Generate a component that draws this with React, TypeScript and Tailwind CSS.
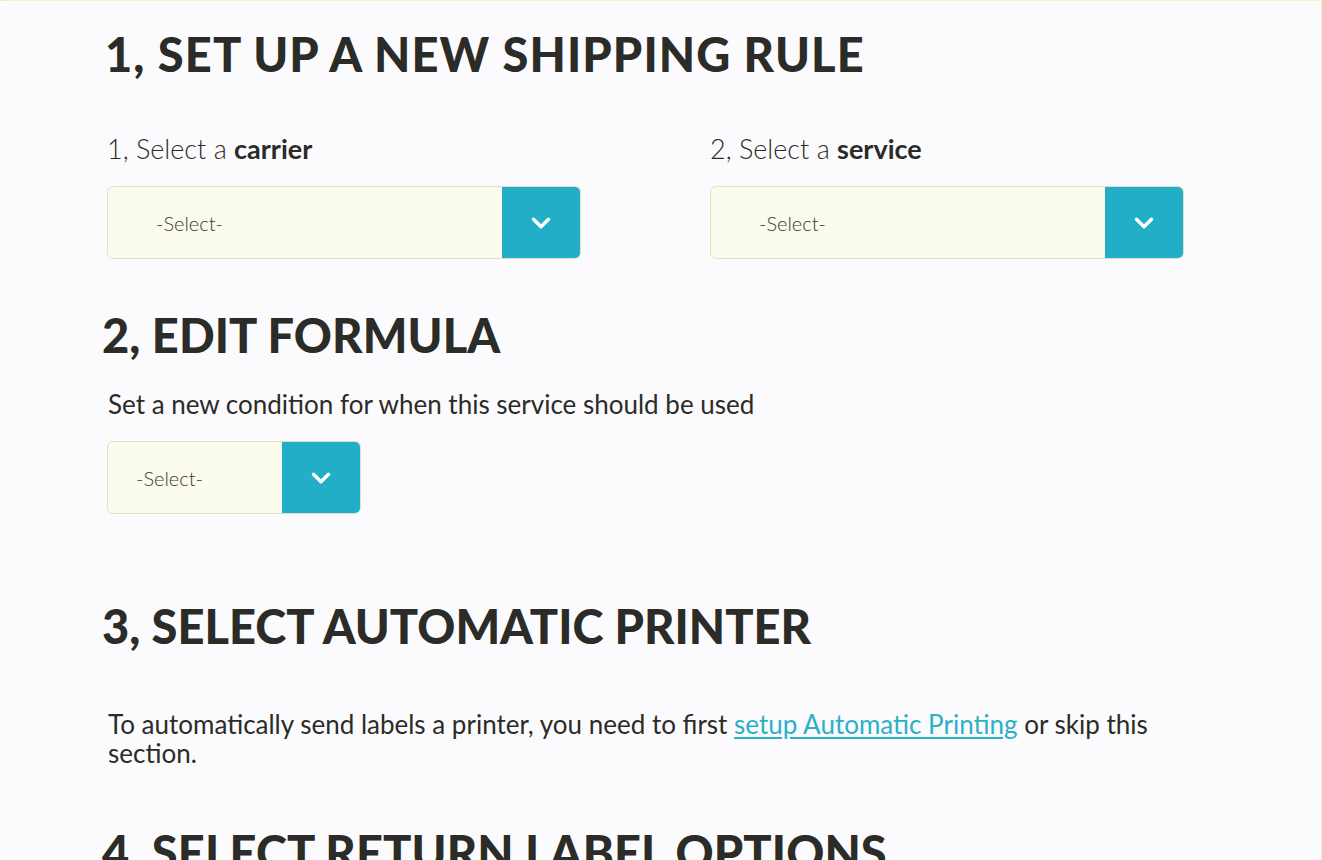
import { ChevronDown } from "lucide-react";

interface SelectBoxProps {
  width: string;
  textPad: string;
}

function SelectBox({ width, textPad }: SelectBoxProps) {
  return (
    <div
      className={`${width} h-[73px] flex rounded-[6px] border border-[#e4e0c6] bg-[#fbfbee] overflow-hidden`}
    >
      <div className={`flex-1 flex items-center ${textPad} text-[20px] font-light text-[#3a3a36]`}>
        -Select-
      </div>
      <div className="w-[78px] flex items-center justify-center bg-[#22aec6]">
        <ChevronDown size={30} strokeWidth={2.8} className="text-white" />
      </div>
    </div>
  );
}

export default function App() {
  return (
    <div className="min-h-[860px] h-[860px] overflow-hidden bg-[#fbfbfe] border-t border-r border-dotted border-[#efe78f] pl-[102px] font-['Lato',sans-serif] text-[#2b2b28]">
      <h1 className="pt-[27px] text-[47px] leading-[52px] font-black tracking-[1.1px] pl-[3px]">
        1, SET UP A NEW SHIPPING RULE
      </h1>

      <div className="mt-[54px] flex gap-[129px] pl-[5px]">
        <div>
          <p className="text-[27px] leading-[30px] font-light">
            1, Select a <span className="font-bold">carrier</span>
          </p>
          <div className="mt-[22px]">
            <SelectBox width="w-[474px]" textPad="pl-[48px]" />
          </div>
        </div>
        <div>
          <p className="text-[27px] leading-[30px] font-light">
            2, Select a <span className="font-bold">service</span>
          </p>
          <div className="mt-[22px]">
            <SelectBox width="w-[474px]" textPad="pl-[48px]" />
          </div>
        </div>
      </div>

      <h2 className="mt-[50px] text-[47px] leading-[52px] font-black tracking-[0.1px]">
        2, EDIT FORMULA
      </h2>
      <p className="mt-[28px] pl-[6px] text-[26px] leading-[30px] font-normal">
        Set a new condition for when this service should be used
      </p>
      <div className="mt-[22px] pl-[5px]">
        <SelectBox width="w-[254px]" textPad="pl-[28px]" />
      </div>

      <h2 className="mt-[86px] text-[47px] leading-[52px] font-black">
        3, SELECT AUTOMATIC PRINTER
      </h2>
      <p className="mt-[58px] pl-[6px] text-[26px] leading-[29px] font-normal">
        To automatically send labels a printer, you need to first{" "}
        <a href="#" className="text-[#2bb0c6] underline underline-offset-[3px]">
          setup Automatic Printing
        </a>{" "}
        or skip this
        <br />
        section.
      </p>

      <h2 className="mt-[58px] text-[47px] leading-[52px] font-black tracking-[0.1px]">
        4, SELECT RETURN LABEL OPTIONS
      </h2>
    </div>
  );
}
